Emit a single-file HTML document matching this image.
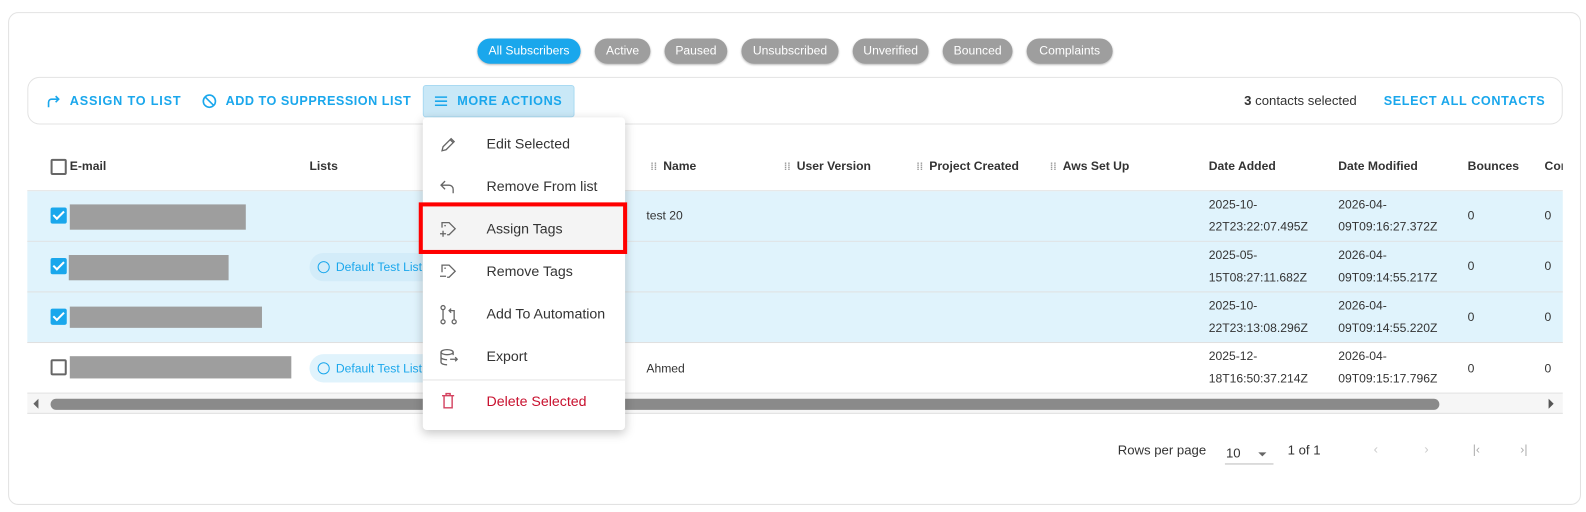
<!DOCTYPE html>
<html><head><style>
*{box-sizing:border-box;margin:0;padding:0}
body{width:1586px;height:512px;background:#fff;font-family:"Liberation Sans",Arial,sans-serif;overflow:hidden;color:#333}
#w{position:absolute;left:0;top:0;width:1568px;height:506px;transform:scale(1.0115,1.0119);transform-origin:0 0}
.abs{position:absolute}
.card{left:8px;top:12px;width:1555px;height:487px;border:1px solid #e2e2e2;border-radius:10px}
.chip{position:absolute;top:38px;height:25px;border-radius:13px;background:#9e9e9e;color:#fff;font-size:12px;line-height:25px;text-align:center;box-shadow:0 1px 2px rgba(0,0,0,.3)}
.tool{left:27px;top:76px;width:1518px;height:47px;border:1px solid #e3e3e3;border-radius:12px}
.tb{position:absolute;top:93px;font-size:12.5px;font-weight:bold;letter-spacing:.8px;color:#1aa7ec}
.th{position:absolute;top:157px;font-size:12px;font-weight:bold;color:#333}
.row{position:absolute;left:27px;width:1518px;height:50px;border-bottom:1px solid #e0e0e0}
.sel{background:#e0f3fc}
.cb{position:absolute;left:50px;width:16px;height:16px;border-radius:2px}
.cb.on{background:#1aa7ec}
.cb.on:after{content:"";position:absolute;left:5px;top:1px;width:4px;height:9px;border:solid #fff;border-width:0 2px 2px 0;transform:rotate(45deg)}
.cb.off{border:2px solid #666}
.red{position:absolute;left:69px;height:25px;background:#9e9e9e}
.td{position:absolute;font-size:12px;color:#333;line-height:22px}
.pill{position:absolute;left:306px;width:112px;height:28px;background:#d3ecf9;border-radius:14px 0 0 14px;font-size:12px;color:#1aa7ec;line-height:28px;padding-left:26px;overflow:hidden;white-space:nowrap}
.pill:before{content:"";position:absolute;left:8px;top:8px;width:10px;height:10px;border:1.5px solid #1aa7ec;border-radius:50%}
.menu{left:418px;top:116px;width:200px;height:309px;background:#fff;border-radius:4px;box-shadow:0 3px 10px rgba(0,0,0,.22)}
.mi{position:absolute;left:63px;font-size:14px;color:#333}
.ic{position:absolute;left:16px}
.g{font-size:10px;color:#999;margin-right:6px}
</style></head><body><div id="w">
<div class="abs card"></div>
<div class="chip" style="left:472px;width:102px;background:#1aa7ec">All Subscribers</div>
<div class="chip" style="left:588px;width:55px">Active</div>
<div class="chip" style="left:657px;width:62px">Paused</div>
<div class="chip" style="left:733px;width:96px">Unsubscribed</div>
<div class="chip" style="left:843px;width:75px">Unverified</div>
<div class="chip" style="left:932px;width:69px">Bounced</div>
<div class="chip" style="left:1015px;width:85px">Complaints</div>

<div class="abs tool"></div>
<svg class="abs" style="left:45px;top:92px" width="16" height="16" viewBox="0 0 16 16"><path d="M3 14V9a3 3 0 0 1 3-3h7M10 3l3 3-3 3" fill="none" stroke="#1aa7ec" stroke-width="1.6"/></svg>
<div class="tb" style="left:69px">ASSIGN TO LIST</div>
<svg class="abs" style="left:199px;top:92px" width="16" height="16" viewBox="0 0 16 16"><circle cx="8" cy="8" r="6" fill="none" stroke="#1aa7ec" stroke-width="1.6"/><path d="M4 4l8 8" stroke="#1aa7ec" stroke-width="1.6"/></svg>
<div class="tb" style="left:223px;letter-spacing:.5px">ADD TO SUPPRESSION LIST</div>
<div class="abs" style="left:418px;top:84px;width:150px;height:32px;background:#c9e8f7;border:1px solid #a9daf2;border-radius:3px"></div>
<svg class="abs" style="left:429px;top:93px" width="14" height="14" viewBox="0 0 14 14"><path d="M1 3h12M1 7h12M1 11h12" stroke="#1aa7ec" stroke-width="1.5"/></svg>
<div class="tb" style="left:452px;letter-spacing:.6px">MORE ACTIONS</div>
<div class="abs" style="left:1230px;top:92px;font-size:13px;color:#333"><b>3</b> contacts selected</div>
<div class="tb" style="left:1368px;letter-spacing:.6px">SELECT ALL CONTACTS</div>

<div class="row" style="top:139px;height:50px"></div>
<div class="cb off" style="top:157px"></div>
<div class="th" style="left:69px">E-mail</div>
<div class="th" style="left:306px">Lists</div>
<div class="th" style="left:643px"><span class="g">⁞⁞</span>Name</div>
<div class="th" style="left:775px"><span class="g">⁞⁞</span>User Version</div>
<div class="th" style="left:906px"><span class="g">⁞⁞</span>Project Created</div>
<div class="th" style="left:1038px"><span class="g">⁞⁞</span>Aws Set Up</div>
<div class="th" style="left:1195px">Date Added</div>
<div class="th" style="left:1323px">Date Modified</div>
<div class="th" style="left:1451px">Bounces</div>
<div class="th" style="left:1527px;width:18px;overflow:hidden">Complaints</div>

<div class="row sel" style="top:189px"></div>
<div class="cb on" style="top:205px"></div><div class="red" style="top:202px;width:174px"></div>
<div class="td" style="left:639px;top:202px">test 20</div>
<div class="td" style="left:1195px;top:191px">2025-10-<br>22T23:22:07.495Z</div>
<div class="td" style="left:1323px;top:191px">2026-04-<br>09T09:16:27.372Z</div>
<div class="td" style="left:1451px;top:202px">0</div><div class="td" style="left:1527px;top:202px">0</div>

<div class="row sel" style="top:239px"></div>
<div class="cb on" style="top:255px"></div><div class="red" style="top:252px;left:68px;width:158px"></div>
<div class="pill" style="top:250px">Default Test List</div>
<div class="td" style="left:1195px;top:241px">2025-05-<br>15T08:27:11.682Z</div>
<div class="td" style="left:1323px;top:241px">2026-04-<br>09T09:14:55.217Z</div>
<div class="td" style="left:1451px;top:252px">0</div><div class="td" style="left:1527px;top:252px">0</div>

<div class="row sel" style="top:289px"></div>
<div class="cb on" style="top:305px"></div><div class="red" style="top:303px;width:190px;height:21px"></div>
<div class="td" style="left:1195px;top:291px">2025-10-<br>22T23:13:08.296Z</div>
<div class="td" style="left:1323px;top:291px">2026-04-<br>09T09:14:55.220Z</div>
<div class="td" style="left:1451px;top:302px">0</div><div class="td" style="left:1527px;top:302px">0</div>

<div class="row" style="top:339px"></div>
<div class="cb off" style="top:355px"></div><div class="red" style="top:352px;width:219px;height:22px"></div>
<div class="pill" style="top:350px;background:#e0f3fc">Default Test List</div>
<div class="td" style="left:639px;top:353px">Ahmed</div>
<div class="td" style="left:1195px;top:341px">2025-12-<br>18T16:50:37.214Z</div>
<div class="td" style="left:1323px;top:341px">2026-04-<br>09T09:15:17.796Z</div>
<div class="td" style="left:1451px;top:353px">0</div><div class="td" style="left:1527px;top:353px">0</div>

<div class="abs" style="left:27px;top:389px;width:1518px;height:20px;background:#f6f6f6;border-bottom:1px solid #e0e0e0"></div>
<div class="abs" style="left:50px;top:394px;width:1373px;height:11px;background:#8a8a8a;border-radius:6px"></div>
<div class="abs" style="left:33px;top:394px;width:0;height:0;border:5px solid transparent;border-right-color:#666;border-left:0"></div>
<div class="abs" style="left:1531px;top:394px;width:0;height:0;border:5px solid transparent;border-left-color:#555;border-right:0"></div>

<div class="abs" style="left:1105px;top:437px;font-size:13px;color:#333">Rows per page</div>
<div class="abs" style="left:1212px;top:440px;font-size:13px;color:#333">10</div>
<div class="abs" style="left:1244px;top:447px;border:4px solid transparent;border-top:4px solid #666;border-bottom:0"></div>
<div class="abs" style="left:1211px;top:458px;width:48px;height:1px;background:#bbb"></div>
<div class="abs" style="left:1273px;top:437px;font-size:13px;color:#333">1 of 1</div>
<div class="abs" style="left:1358px;top:436px;font-size:13px;color:#ccc">‹</div>
<div class="abs" style="left:1408px;top:436px;font-size:13px;color:#ccc">›</div>
<div class="abs" style="left:1456px;top:437px;font-size:12px;color:#aaa">|‹</div>
<div class="abs" style="left:1503px;top:437px;font-size:12px;color:#aaa">›|</div>

<div class="abs menu">
<svg class="ic" style="top:18px" width="18" height="18" viewBox="0 0 18 18"><path d="M3 15l1-4 8-8 3 3-8 8z M11 4l3 3" fill="none" stroke="#666" stroke-width="1.3"/></svg>
<div class="mi" style="top:18px">Edit Selected</div>
<svg class="ic" style="top:60px" width="18" height="18" viewBox="0 0 18 18"><path d="M6 3L2 7l4 4M2 7h8a4 4 0 0 1 4 4v4" fill="none" stroke="#666" stroke-width="1.3"/></svg>
<div class="mi" style="top:60px">Remove From list</div>
<div class="abs" style="left:0;top:85px;width:200px;height:48px;background:#f4f4f4"></div>
<svg class="ic" style="top:101px" width="20" height="20" viewBox="0 0 20 20"><path d="M3 8V3h7l6 6-6 6H8" fill="none" stroke="#666" stroke-width="1.3"/><path d="M1 14h6M4 11v6" stroke="#666" stroke-width="1.3"/><circle cx="6" cy="6" r=".8" fill="#666"/></svg>
<div class="mi" style="top:102px">Assign Tags</div>
<svg class="ic" style="top:143px" width="20" height="20" viewBox="0 0 20 20"><path d="M3 10V3h7l6 6-6 6H8" fill="none" stroke="#666" stroke-width="1.3"/><path d="M1 14h6" stroke="#666" stroke-width="1.3"/><circle cx="6" cy="6" r=".8" fill="#666"/></svg>
<div class="mi" style="top:144px">Remove Tags</div>
<svg class="ic" style="top:185px" width="20" height="20" viewBox="0 0 20 20"><circle cx="4" cy="3" r="2" fill="none" stroke="#666" stroke-width="1.3"/><circle cx="4" cy="17" r="2" fill="none" stroke="#666" stroke-width="1.3"/><circle cx="15" cy="17" r="2" fill="none" stroke="#666" stroke-width="1.3"/><path d="M4 5v10M15 15V6h-5M12 4l-2 2 2 2" fill="none" stroke="#666" stroke-width="1.3"/></svg>
<div class="mi" style="top:186px">Add To Automation</div>
<svg class="ic" style="top:227px" width="20" height="20" viewBox="0 0 20 20"><ellipse cx="8" cy="5" rx="6" ry="2.5" fill="none" stroke="#666" stroke-width="1.3"/><path d="M2 5v10c0 1.5 3 2.5 6 2.5M2 10c0 1.5 3 2.5 6 2.5M14 5v3M11 12h7M16 10l2 2-2 2" fill="none" stroke="#666" stroke-width="1.3"/></svg>
<div class="mi" style="top:228px">Export</div>
<div class="abs" style="left:0;top:259px;width:200px;height:1px;background:#e3e3e3"></div>
<svg class="ic" style="top:271px" width="18" height="18" viewBox="0 0 18 18"><path d="M3 4h12M7 4V2h4v2M5 4v12h8V4" fill="none" stroke="#d4425f" stroke-width="1.4"/></svg>
<div class="mi" style="top:272px;color:#c8102e">Delete Selected</div>
</div>
<div class="abs" style="left:414px;top:200px;width:206px;height:51px;border:4px solid #f00"></div>
</div></body></html>
